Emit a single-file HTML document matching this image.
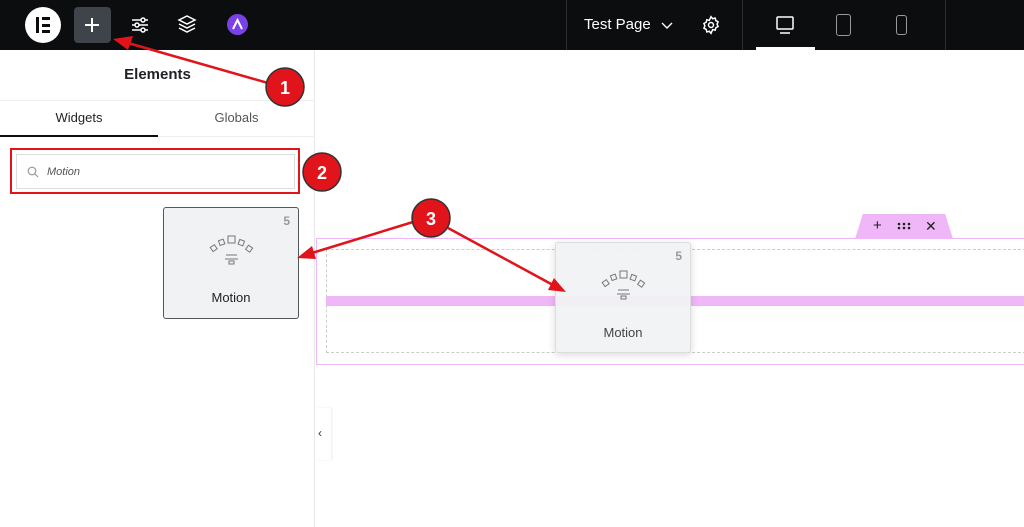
<!DOCTYPE html>
<html><head><meta charset="utf-8"><style>
*{margin:0;padding:0;box-sizing:border-box}
body{width:1024px;height:527px;overflow:hidden;background:#fff;font-family:"Liberation Sans",sans-serif;position:relative}
.top{position:absolute;left:0;top:0;width:1024px;height:50px;background:#0c0d0e}
.abs{position:absolute}
.card{position:absolute;background:#f1f2f3;border-radius:3px;text-align:center;color:#1f2124;font-size:13px}
</style></head><body>
<div class="top">
  <div class="abs" style="left:25px;top:7px;width:36px;height:36px;border-radius:50%;background:#fff"></div>
  <div class="abs" style="left:36px;top:17px;width:3px;height:16px;background:#0c0d0e"></div>
  <div class="abs" style="left:42px;top:17px;width:8px;height:3px;background:#0c0d0e"></div>
  <div class="abs" style="left:42px;top:23.5px;width:8px;height:3px;background:#0c0d0e"></div>
  <div class="abs" style="left:42px;top:30px;width:8px;height:3px;background:#0c0d0e"></div>
  <div class="abs" style="left:74px;top:7px;width:37px;height:36px;border-radius:4px;background:#3f444b"></div>
  <div class="abs" style="left:85px;top:24px;width:14px;height:1.6px;background:#fff"></div>
  <div class="abs" style="left:91.2px;top:18px;width:1.6px;height:14px;background:#fff"></div>
  <svg class="abs" style="left:130px;top:15px" width="20" height="20" viewBox="0 0 20 20" fill="none" stroke="#fff" stroke-width="1.5"><path d="M2 5h16M2 10h16M2 15h16"/><circle cx="13" cy="5" r="2" fill="#0c0d0e"/><circle cx="7" cy="10" r="2" fill="#0c0d0e"/><circle cx="13" cy="15" r="2" fill="#0c0d0e"/></svg>
  <svg class="abs" style="left:177px;top:14px" width="20" height="22" viewBox="0 0 20 22" fill="none" stroke="#fff" stroke-width="1.5"><path d="M10 2l8 4-8 4-8-4z"/><path d="M2 10l8 4 8-4M2 14l8 4 8-4"/></svg>
  <div class="abs" style="left:227px;top:14px;width:21px;height:21px;border-radius:50%;background:#7a42e6"></div>
  <svg class="abs" style="left:231px;top:18px" width="13" height="13" viewBox="0 0 13 13" fill="none" stroke="#fff" stroke-width="2"><path d="M2 11L6.5 2 11 11"/></svg>
  <div class="abs" style="left:566px;top:0;width:1px;height:50px;background:#2c2e31"></div>
  <div class="abs" style="left:742px;top:0;width:1px;height:50px;background:#2c2e31"></div>
  <div class="abs" style="left:945px;top:0;width:1px;height:50px;background:#2c2e31"></div>
  <div class="abs" style="left:584px;top:16px;color:#fff;font-size:15px">Test Page</div>
  <svg class="abs" style="left:661px;top:20px" width="12" height="10" viewBox="0 0 12 10" fill="none" stroke="#fff" stroke-width="1.4"><path d="M1 3l5 5 5-5"/></svg>
  <svg class="abs" style="left:701px;top:15px" width="20" height="20" viewBox="0 0 24 24" fill="none" stroke="#fff" stroke-width="1.8"><circle cx="12" cy="12" r="3"/><path d="M12 2l2 2.5 3-.8.8 3 2.7 1.5-1.2 2.8 1.2 2.8-2.7 1.5-.8 3-3-.8L12 22l-2-2.5-3 .8-.8-3L3.5 15.8 4.7 13 3.5 10.2 6.2 8.7l.8-3 3 .8z"/></svg>
  <svg class="abs" style="left:775px;top:15px" width="20" height="20" viewBox="0 0 20 20" fill="none" stroke="#fff" stroke-width="1.5"><rect x="2" y="2" width="16" height="12" rx="1"/><path d="M5 18h10"/></svg>
  <div class="abs" style="left:756px;top:47px;width:59px;height:3px;background:#fff"></div>
  <div class="abs" style="left:836px;top:14px;width:15px;height:22px;border:1.5px solid #999;border-radius:3px"></div>
  <div class="abs" style="left:896px;top:15px;width:11px;height:20px;border:1.5px solid #999;border-radius:3px"></div>
</div>
<div class="abs" style="left:0;top:50px;width:315px;height:477px;background:#fff;border-right:1px solid #e6e8ea"></div>
<div class="abs" style="left:0;top:66px;width:315px;text-align:center;font-weight:bold;font-size:15px;color:#1f2124">Elements</div>
<div class="abs" style="left:0;top:100px;width:315px;height:1px;background:#eee"></div>
<div class="abs" style="left:0;top:110px;width:158px;text-align:center;font-size:13px;color:#1f2124">Widgets</div>
<div class="abs" style="left:158px;top:110px;width:157px;text-align:center;font-size:13px;color:#555">Globals</div>
<div class="abs" style="left:0;top:135px;width:158px;height:2px;background:#0c0d0e"></div>
<div class="abs" style="left:158px;top:136px;width:157px;height:1px;background:#eee"></div>
<div class="abs" style="left:10px;top:148px;width:290px;height:46px;border:2px solid #e0141a"></div>
<div class="abs" style="left:16px;top:154px;width:279px;height:35px;border:1px solid #ddd;background:#fff"></div>
<svg class="abs" style="left:27px;top:166px" width="12" height="12" viewBox="0 0 12 12" fill="none" stroke="#999" stroke-width="1.2"><circle cx="5" cy="5" r="3.8"/><path d="M8 8l3 3"/></svg>
<div class="abs" style="left:47px;top:166px;font-size:11px;font-style:italic;color:#555">Motion</div>
<div class="abs" style="left:316px;top:408px;width:15px;height:52px;background:#fff;box-shadow:1px 0 2px rgba(0,0,0,.08)"></div>
<div class="abs" style="left:318px;top:426px;font-size:12px;color:#333">‹</div>
<div class="abs" style="left:316px;top:238px;width:720px;height:127px;border:1.5px solid #efb7f7"></div>
<div class="abs" style="left:855px;top:214px;width:98px;height:25px;background:#efb7f7;clip-path:polygon(8% 0,92% 0,100% 100%,0 100%);border-radius:4px 4px 0 0"></div>
<div class="abs" style="left:873px;top:217px;font-size:15px;color:#1f2124">+</div>
<svg class="abs" style="left:897px;top:222px" width="16" height="8" viewBox="0 0 16 8" fill="#1f2124"><circle cx="2" cy="2" r="1.3"/><circle cx="7" cy="2" r="1.3"/><circle cx="12" cy="2" r="1.3"/><circle cx="2" cy="6" r="1.3"/><circle cx="7" cy="6" r="1.3"/><circle cx="12" cy="6" r="1.3"/></svg>
<div class="abs" style="left:925px;top:218px;font-size:14px;color:#1f2124">✕</div>
<div class="abs" style="left:326px;top:249px;width:710px;height:104px;border:1px dashed #ccc"></div>
<div class="abs" style="left:326px;top:296px;width:700px;height:10px;background:#efb7f7"></div>
<div class="card" style="left:163px;top:207px;width:136px;height:112px;border:1px solid #555">
  <div style="position:absolute;right:8px;top:6px;font-size:12px;color:#999;font-weight:bold">5</div>
  <svg style="position:absolute;left:43px;top:24px" width="50" height="40" viewBox="0 0 50 40" fill="none" stroke="#777" stroke-width="1"><rect x="21" y="4" width="7" height="7"/><rect x="12" y="8" width="5" height="5" transform="rotate(-20 14 10)"/><rect x="32" y="8" width="5" height="5" transform="rotate(20 34 10)"/><rect x="4" y="14" width="5" height="5" transform="rotate(-35 6 16)"/><rect x="40" y="14" width="5" height="5" transform="rotate(35 42 16)"/><path d="M19 23h11M18 27h13"/><rect x="22" y="29" width="5" height="3"/></svg>
  <div style="position:absolute;left:0;right:0;top:82px">Motion</div>
</div>
<div class="card" style="left:555px;top:242px;width:136px;height:111px;border:1px solid #ddd;box-shadow:0 2px 8px rgba(0,0,0,.15);background:rgba(241,242,243,.93)">
  <div style="position:absolute;right:8px;top:6px;font-size:12px;color:#999;font-weight:bold">5</div>
  <svg style="position:absolute;left:43px;top:24px" width="50" height="40" viewBox="0 0 50 40" fill="none" stroke="#777" stroke-width="1"><rect x="21" y="4" width="7" height="7"/><rect x="12" y="8" width="5" height="5" transform="rotate(-20 14 10)"/><rect x="32" y="8" width="5" height="5" transform="rotate(20 34 10)"/><rect x="4" y="14" width="5" height="5" transform="rotate(-35 6 16)"/><rect x="40" y="14" width="5" height="5" transform="rotate(35 42 16)"/><path d="M19 23h11M18 27h13"/><rect x="22" y="29" width="5" height="3"/></svg>
  <div style="position:absolute;left:0;right:0;top:82px;color:#444">Motion</div>
</div>
<svg class="abs" style="left:0;top:0" width="1024" height="527" viewBox="0 0 1024 527">
<g stroke="#e0141a" stroke-width="2.5" fill="#e0141a">
<path d="M268 83L128 43"/><path d="M113 39l20 -3-5 14z" stroke="none"/>
<path d="M413 222L312 253"/><path d="M297 258l15-12 4 13z" stroke="none"/>
<path d="M448 228L553 285"/><path d="M566 292l-18-2 6-12z" stroke="none"/>
</g>
<g fill="#e0141a" stroke="#333" stroke-width="1.5">
<circle cx="285" cy="87" r="19"/><circle cx="322" cy="172" r="19"/><circle cx="431" cy="218" r="19"/>
</g>
<g fill="#fff" font-family="Liberation Sans" font-weight="bold" font-size="18" text-anchor="middle">
<text x="285" y="94">1</text><text x="322" y="179">2</text><text x="431" y="225">3</text>
</g>
</svg>
</body></html>
